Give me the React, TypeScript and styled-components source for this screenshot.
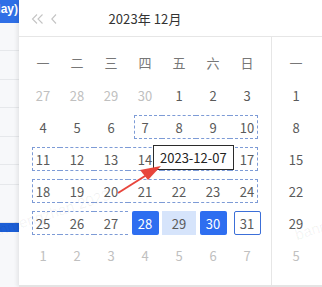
import styled, { createGlobalStyle } from 'styled-components';

const GlobalStyle = createGlobalStyle`
  html, body {
    margin: 0;
    padding: 0;
    background: #ffffff;
  }
  body {
    font-family: "Noto Sans CJK SC", "Noto Sans", sans-serif;
  }
`;

type HoverKind = 'none' | 'start' | 'mid' | 'end';
type CellKind = 'normal' | 'selected' | 'inRange' | 'today';

interface DayCell {
  day: number;
  muted?: boolean;
  kind?: CellKind;
  hover?: HoverKind;
}

const WEEKDAYS = ['一', '二', '三', '四', '五', '六', '日'];

const Page = styled.div`
  position: relative;
  display: flex;
  width: 322px;
  height: 287px;
  overflow: hidden;
  background: #ffffff;
`;

const LeftStrip = styled.div`
  display: flex;
  flex-direction: column;
  width: 19px;
  flex-shrink: 0;
  background: #f7f8fa;
  overflow: hidden;
`;

const StripHead = styled.div`
  height: 23px;
  background: #2f6fe6;
  color: #ffffff;
  font-family: "Liberation Sans", Arial, sans-serif;
  font-weight: bold;
  font-size: 12px;
  line-height: 18px;
  white-space: nowrap;
  direction: rtl;
  text-align: left;
  padding-right: 1px;
`;

const StripRow = styled.div<{ $h: number; $blue?: boolean }>`
  height: ${p => p.$h}px;
  flex-shrink: 0;
  border-bottom: 1px solid ${p => (p.$blue ? '#1c5fd6' : '#e6e8eb')};
  background: ${p => (p.$blue ? '#1c5fd6' : 'transparent')};
  box-sizing: border-box;
`;

const Popup = styled.div`
  position: relative;
  display: flex;
  flex-direction: column;
  flex: 1;
  background: #ffffff;
  box-shadow: -2px 0 4px rgba(0, 0, 0, 0.08);
  border-bottom: 2px solid #e4e4e4;
  box-sizing: border-box;
`;

const Header = styled.div`
  display: flex;
  align-items: center;
  height: 36px;
  border-bottom: 1px solid #e6e6e6;
`;

const HeaderPanel = styled.div`
  position: relative;
  display: flex;
  align-items: center;
  justify-content: center;
  width: 252px;
  height: 100%;
`;

const NavGroup = styled.div`
  position: absolute;
  left: 12px;
  top: 14px;
  display: flex;
  gap: 7px;
`;

const Title = styled.div`
  font-size: 13px;
  color: #333333;
  letter-spacing: 0.1px;
`;

const Body = styled.div`
  display: flex;
  flex: 1;
`;

const Panel = styled.div`
  position: relative;
  width: 238px;
  padding: 10px 7px 0;
  flex-shrink: 0;
`;

const Divider = styled.div`
  width: 1px;
  background: #e6e6e6;
  flex-shrink: 0;
`;

const Grid = styled.div`
  display: grid;
  grid-template-columns: repeat(7, 34px);
  grid-auto-rows: 32px;
`;

const WeekLabel = styled.div`
  display: flex;
  align-items: center;
  justify-content: center;
  font-size: 13px;
  color: #777777;
  margin-bottom: 2px;
`;

const Cell = styled.div<{ $hover: HoverKind; $col?: number }>`
  position: relative;
  display: flex;
  align-items: center;
  justify-content: center;
  grid-column: ${p => p.$col ?? 'auto'};

  &::after {
    content: '';
    display: ${p => (p.$hover === 'none' ? 'none' : 'block')};
    position: absolute;
    top: 4px;
    bottom: 4px;
    left: ${p => (p.$hover === 'start' ? '6px' : '0')};
    right: ${p => (p.$hover === 'end' ? '6px' : '0')};
    border-top: 1px dashed #7d9bd6;
    border-bottom: 1px dashed #7d9bd6;
    border-left: ${p => (p.$hover === 'start' ? '1px dashed #7d9bd6' : 'none')};
    border-right: ${p => (p.$hover === 'end' ? '1px dashed #7d9bd6' : 'none')};
    pointer-events: none;
  }
`;

const InRangeBg = styled.div`
  position: absolute;
  top: 4px;
  bottom: 4px;
  left: 0;
  right: 0;
  background: #d6e4fb;
`;

const DayInner = styled.div<{ $kind: CellKind; $muted?: boolean }>`
  position: relative;
  z-index: 1;
  width: 27px;
  height: 24px;
  box-sizing: border-box;
  display: flex;
  align-items: center;
  justify-content: center;
  font-size: 13px;
  border-radius: 2px;
  color: ${p => (p.$kind === 'selected' ? '#ffffff' : p.$muted ? '#c0c0c0' : '#5a5a5a')};
  background: ${p => (p.$kind === 'selected' ? '#2e6ef0' : 'transparent')};
  border: ${p => (p.$kind === 'today' ? '1px solid #3c6fd8' : 'none')};
`;

const Tooltip = styled.div`
  position: absolute;
  left: 134px;
  top: 108px;
  height: 23px;
  padding: 0 6px;
  display: flex;
  align-items: center;
  border: 1px solid #2b2b2b;
  background: #ffffff;
  font-size: 13px;
  color: #222222;
  z-index: 3;
`;

const ArrowLayer = styled.svg`
  position: absolute;
  left: 0;
  top: 0;
  z-index: 4;
  pointer-events: none;
`;

const Watermark = styled.div<{ $x: number; $y: number }>`
  position: absolute;
  left: ${p => p.$x}px;
  top: ${p => p.$y}px;
  font-family: "Liberation Sans", Arial, sans-serif;
  font-size: 15px;
  color: rgba(0, 0, 0, 0.06);
  white-space: nowrap;
  transform: rotate(-18deg);
  transform-origin: left bottom;
  pointer-events: none;
  z-index: 5;
`;

const decWeeks: DayCell[][] = [
  [27, 28, 29, 30].map(d => ({ day: d, muted: true })).concat([1, 2, 3].map(d => ({ day: d }))),
  [
    { day: 4 },
    { day: 5 },
    { day: 6 },
    { day: 7, hover: 'start' },
    { day: 8, hover: 'mid' },
    { day: 9, hover: 'mid' },
    { day: 10, hover: 'end' },
  ],
  [11, 12, 13, 14, 15, 16, 17].map((d, i) => ({
    day: d,
    hover: (i === 0 ? 'start' : i === 6 ? 'end' : 'mid') as HoverKind,
  })),
  [18, 19, 20, 21, 22, 23, 24].map((d, i) => ({
    day: d,
    hover: (i === 0 ? 'start' : i === 6 ? 'end' : 'mid') as HoverKind,
  })),
  [
    { day: 25, hover: 'start' },
    { day: 26, hover: 'mid' },
    { day: 27, hover: 'mid' },
    { day: 28, kind: 'selected' },
    { day: 29, kind: 'inRange' },
    { day: 30, kind: 'selected' },
    { day: 31, kind: 'today' },
  ],
  [1, 2, 3, 4, 5, 6, 7].map(d => ({ day: d, muted: true })),
];

const janFirstColumn: DayCell[] = [
  { day: 1 },
  { day: 8 },
  { day: 15 },
  { day: 22 },
  { day: 29 },
  { day: 5, muted: true },
];

const NavIcons = () => (
  <NavGroup>
    <svg width="13" height="10" viewBox="0 0 13 10" fill="none" stroke="#c4c4c4" strokeWidth="1.1">
      <path d="M6 0.5 L1.5 5 L6 9.5" />
      <path d="M11.5 0.5 L7 5 L11.5 9.5" />
    </svg>
    <svg width="6" height="10" viewBox="0 0 6 10" fill="none" stroke="#c4c4c4" strokeWidth="1.1">
      <path d="M5 0.5 L0.8 5 L5 9.5" />
    </svg>
  </NavGroup>
);

const renderCell = (c: DayCell, key: string, col?: number) => {
  const kind = c.kind ?? 'normal';
  return (
    <Cell key={key} $hover={c.hover ?? 'none'} $col={col}>
      {kind === 'inRange' && <InRangeBg />}
      <DayInner $kind={kind} $muted={c.muted}>
        {c.day}
      </DayInner>
    </Cell>
  );
};

const App = () => {
  return (
    <>
      <GlobalStyle />
      <Page>
        <LeftStrip>
          <StripHead>(Today)</StripHead>
          <StripRow $h={28} />
          <StripRow $h={29} />
          <StripRow $h={28} />
          <StripRow $h={29} />
          <StripRow $h={28} />
          <StripRow $h={20} />
          <StripRow $h={38} />
          <StripRow $h={9} $blue />
        </LeftStrip>

        <Popup>
          <Header>
            <HeaderPanel>
              <NavIcons />
              <Title>2023年 12月</Title>
            </HeaderPanel>
          </Header>

          <Body>
            <Panel>
              <Grid>
                {WEEKDAYS.map(w => (
                  <WeekLabel key={w}>{w}</WeekLabel>
                ))}
                {decWeeks.map((week, wi) => week.map((c, ci) => renderCell(c, `${wi}-${ci}`)))}
              </Grid>
              <Tooltip>2023-12-07</Tooltip>
            </Panel>
            <Divider />
            <Panel>
              <Grid>
                <WeekLabel>一</WeekLabel>
                {janFirstColumn.map((c, i) => renderCell(c, `j-${i}`, 1))}
              </Grid>
            </Panel>
          </Body>

          <ArrowLayer width="303" height="287" viewBox="0 0 303 287">
            <line x1="99" y1="193" x2="134" y2="171" stroke="#e8453c" strokeWidth="2" />
            <polygon points="142,166 121,170 129,180" fill="#e8453c" />
          </ArrowLayer>
        </Popup>

        <Watermark $x={-14} $y={226}>banmengzhan 2023</Watermark>
        <Watermark $x={298} $y={226}>banmengzhan</Watermark>
      </Page>
    </>
  );
};

export default App;
